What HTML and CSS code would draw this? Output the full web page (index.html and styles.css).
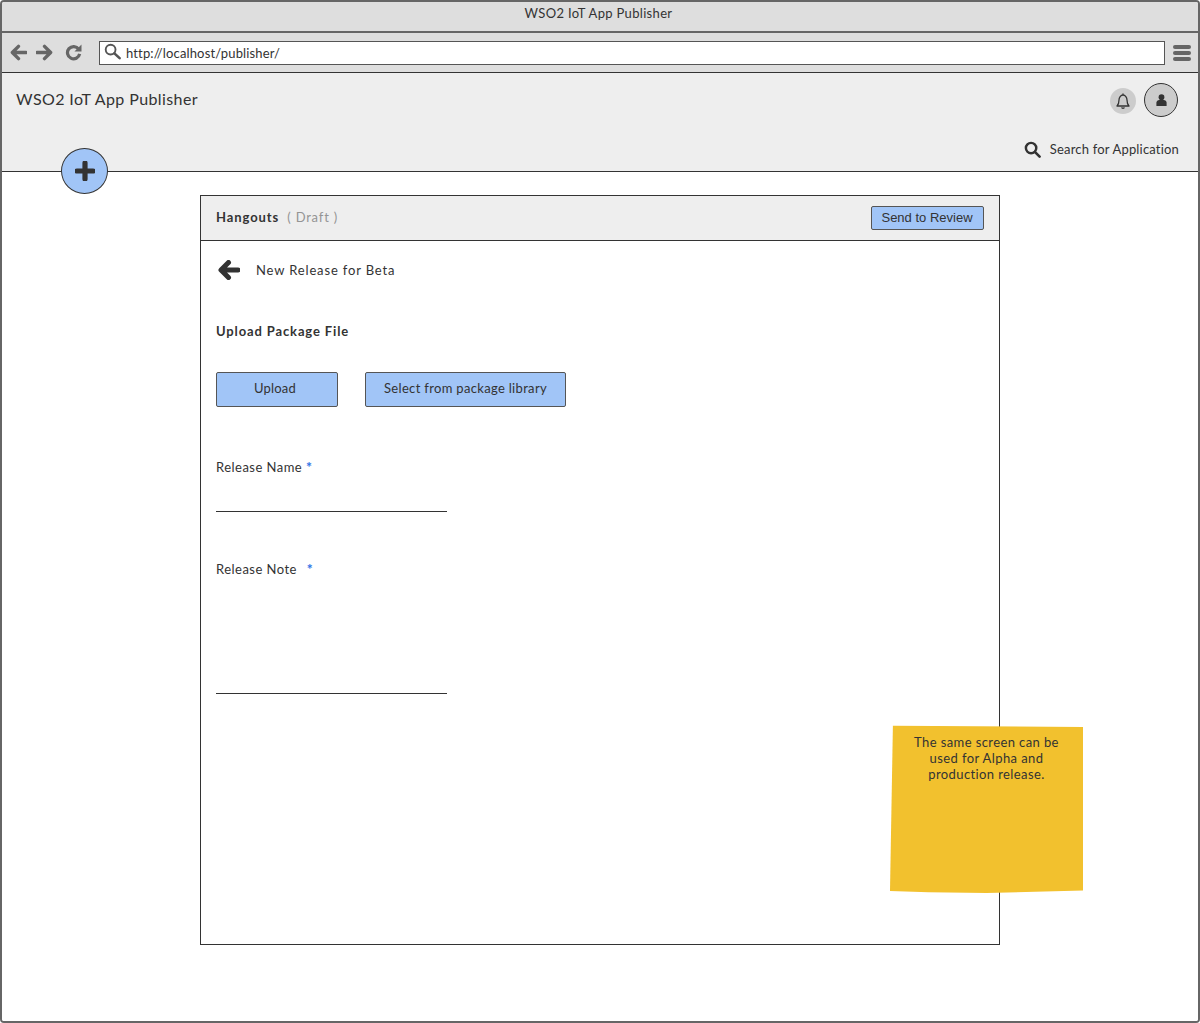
FILE: index.html
```html
<!DOCTYPE html>
<html lang="en">
<head>
<meta charset="utf-8">
<title>WSO2 IoT App Publisher</title>
<link rel="stylesheet" href="styles.css">
</head>
<body>
<div class="window">
  <div class="titlebar">WSO2 IoT App Publisher</div>
  <div class="toolbar">
    <div class="nav">
      <svg class="nav-icon" viewBox="0 0 18 18"><path d="M9 2.500 2.500 9 9 15.500M3 9h14" fill="none" stroke="#666" stroke-width="3.600" stroke-linecap="round" stroke-linejoin="round"/></svg>
      <svg class="nav-icon" viewBox="0 0 18 18"><path d="M9 2.500 15.500 9 9 15.500M15 9H1" fill="none" stroke="#666" stroke-width="3.600" stroke-linecap="round" stroke-linejoin="round"/></svg>
      <svg class="nav-icon reload" viewBox="0 0 18 18"><path d="M14.500 5.500A6.500 6.500 0 1 0 15.500 10.500" fill="none" stroke="#666" stroke-width="3.400"/><path d="M10 8h7.500V.5z" fill="#666"/></svg>
    </div>
    <div class="address">
      <svg class="address-icon" viewBox="0 0 18 18"><circle cx="7" cy="7" r="5.200" fill="none" stroke="#555" stroke-width="2"/><path d="m11 11 5.500 5" stroke="#555" stroke-width="2.800" stroke-linecap="round"/></svg>
      <span class="address-text">http://localhost/publisher/</span>
    </div>
    <div class="menu"><i></i><i></i><i></i></div>
  </div>
  <header class="app-header">
    <div class="app-top">
      <div class="app-title">WSO2 IoT App Publisher</div>
      <div class="app-actions">
        <div class="bell">
          <svg viewBox="0 0 18 18" class="bell-icon"><path d="M3 14c1.500-1.500 2-3 2-6 0-2.500 1.700-5 4-5s4 2.500 4 5c0 3 .5 4.500 2 6zM7.500 15.500c.5 1 2.500 1 3 0M9 1.500V3" fill="none" stroke="#333" stroke-width="1.300" stroke-linejoin="round"/></svg>
        </div>
        <div class="avatar">
          <svg viewBox="0 0 14 14" class="avatar-icon"><circle cx="7" cy="4" r="3.100" fill="#333"/><path d="M1.500 13.500V10c0-1.800 1.500-3 3-3h5c1.500 0 3 1.200 3 3v3.500z" fill="#333"/></svg>
        </div>
      </div>
    </div>
    <div class="app-search">
      <svg viewBox="0 0 18 18" class="search-icon"><circle cx="7.500" cy="7.500" r="5.500" fill="none" stroke="#333" stroke-width="2.600"/><path d="m11.500 11.500 5 5" stroke="#333" stroke-width="2.800" stroke-linecap="round"/></svg>
      <span>Search for Application</span>
    </div>
    <button class="fab" aria-label="Add">
      <svg viewBox="0 0 20 20" class="fab-icon"><path d="M10 2v16M2 10h16" stroke="#333" stroke-width="5.200" stroke-linecap="round"/></svg>
    </button>
  </header>
  <main class="content">
    <section class="card">
      <div class="card-head">
        <div class="card-title"><strong>Hangouts</strong><span class="status">( Draft )</span></div>
        <button class="review">Send to Review</button>
      </div>
      <div class="card-body">
        <div class="release-head">
          <svg viewBox="0 0 22 20" class="back-icon"><path d="M10.500 2.500 3 10l7.500 7.500M4 10h16" fill="none" stroke="#333" stroke-width="5" stroke-linecap="round" stroke-linejoin="round"/></svg>
          <span>New Release for Beta</span>
        </div>
        <h2 class="section-title">Upload Package File</h2>
        <div class="upload-row">
          <button class="btn btn-upload">Upload</button>
          <button class="btn btn-library">Select from package library</button>
        </div>
        <div class="field field-name">
          <div class="field-label">Release Name <span class="req">*</span></div>
        </div>
        <div class="field field-note">
          <div class="field-label">Release Note <span class="req req-gap">*</span></div>
        </div>
      </div>
    </section>
    <aside class="note">The same screen can be used for Alpha and production release.</aside>
  </main>
</div>
</body>
</html>
```

FILE: styles.css
```css
* { box-sizing: border-box; }
html, body { margin: 0; padding: 0; background: #fff; }
body { font-family: Lato, "Open Sans", sans-serif; color: #333; font-size: 13px; }
button { font: inherit; color: inherit; cursor: pointer; padding: 0; }

.window {
  height: 1023px;
  width: 1200px;
  border: 2px solid #666;
  border-radius: 4px;
  display: flex;
  flex-direction: column;
  overflow: hidden;
  position: relative;
}

.titlebar {
  height: 31px;
  background: #dedede;
  border-bottom: 2px solid #666;
  text-align: center;
  line-height: 23px;
  letter-spacing: .32px;
  padding-right: 3px;
}

.toolbar {
  height: 40px;
  background: #dedede;
  border-bottom: 1px solid #333;
  display: flex;
  align-items: center;
  padding: 0 7px 0 8px;
}
.nav { display: flex; align-items: center; width: 89px; gap: 9px; }
.nav-icon { width: 17px; height: 17px; }
.reload { margin-left: 3px; }
.address {
  width: 1066px;
  height: 24px;
  background: #fff;
  border: 1px solid #555;
  display: flex;
  align-items: center;
  padding-left: 4px;
  gap: 5px;
  letter-spacing: .14px;
}
.address-text { margin-top: 1px; }
.address-icon { width: 17px; height: 17px; margin-top: -3px; }
.menu { margin-left: 8px; width: 18px; display: flex; flex-direction: column; gap: 2px; }
.menu i { display: block; height: 4px; background: #666; border-radius: 2px; }

.app-header {
  height: 99px;
  background: #eee;
  border-bottom: 1px solid #333;
  margin: 0 -1px;
  position: relative;
  padding: 0 20px 0 15px;
  flex: none;
}
.app-top { display: flex; justify-content: space-between; }
.app-title { font-size: 16px; line-height: 20px; margin-top: 16px; letter-spacing: .4px; }
.app-actions { display: flex; align-items: center; gap: 8px; margin: 10px 1px 0 0; }
.bell {
  width: 26px; height: 26px; border-radius: 50%;
  background: #ccc;
  display: flex; align-items: center; justify-content: center;
  margin-top: 1px;
}
.bell-icon { width: 18px; height: 18px; }
.avatar {
  width: 34px; height: 34px; border-radius: 50%;
  background: #ccc;
  border: 1px solid #333;
  display: flex; align-items: center; justify-content: center;
}
.avatar-icon { width: 13px; height: 14px; }
.app-search {
  display: flex;
  justify-content: flex-end;
  align-items: center;
  gap: 9px;
  margin-top: 22px;
  letter-spacing: .18px;
  line-height: 18px;
}
.search-icon { width: 17px; height: 17px; margin-top: 2px; }

.fab {
  position: absolute;
  left: 60px;
  top: 75px;
  width: 47px;
  height: 46px;
  border-radius: 50%;
  background: #a1c5f7;
  border: 1px solid #333;
  display: flex;
  align-items: center;
  justify-content: center;
  z-index: 2;
}
.fab-icon { width: 20px; height: 20px; }

.content {
  flex: 1;
  padding: 23px 198px 0;
  position: relative;
  background: #fff;
}
.card {
  height: 750px;
  border: 1px solid #333;
  display: flex;
  flex-direction: column;
}
.card-head {
  height: 45px;
  background: #eee;
  border-bottom: 1px solid #333;
  display: flex;
  align-items: center;
  justify-content: space-between;
  padding: 0 15px;
  flex: none;
}
.card-title { letter-spacing: .92px; margin-top: -2px; }
.card-title strong { font-weight: 700; }
.status { margin-left: 8px; color: #949494; letter-spacing: .8px; }
.review {
  width: 113px;
  height: 24px;
  background: #a1c5f7;
  border: 1px solid #555;
  border-radius: 2px;
  font-family: "Liberation Sans", Arial, sans-serif;
  font-size: 13px;
  padding: 0 1px 2px 0;
}

.card-body { padding: 0 15px; }
.release-head {
  display: flex;
  align-items: center;
  gap: 16px;
  margin: 18px 0 0 2px;
  height: 22px;
  letter-spacing: .85px;
}
.back-icon { width: 22px; height: 20px; }
.section-title {
  margin: 40px 0 0;
  font-size: 13px;
  line-height: 20px;
  font-weight: 700;
  letter-spacing: .87px;
}
.upload-row { display: flex; gap: 27px; margin-top: 31px; }
.btn {
  height: 35px;
  background: #a1c5f7;
  border: 1px solid #555;
  border-radius: 2px;
  padding-bottom: 3px;
}
.btn-upload { width: 122px; letter-spacing: .17px; padding-right: 4px; }
.btn-library { width: 201px; letter-spacing: .32px; }

.field { width: 231px; border-bottom: 1px solid #333; }
.field-label { line-height: 18px; letter-spacing: .47px; }
.req { color: #2f74e6; font-weight: 900; font-size: 14px; }
.req-gap { margin-left: 6px; }
.field-name { height: 54px; margin-top: 51px; }
.field-note { height: 134px; margin-top: 48px; }

.note {
  position: absolute;
  left: 888px;
  top: 553px;
  width: 193px;
  height: 168px;
  background: #f2c12e;
  clip-path: polygon(1.500% .5%, 100% 1.200%, 100% 98.500%, 50% 100%, 20% 99.500%, 0 98.800%);
  padding: 9px 20px 0;
  text-align: center;
  line-height: 16px;
  letter-spacing: .4px;
}
```
